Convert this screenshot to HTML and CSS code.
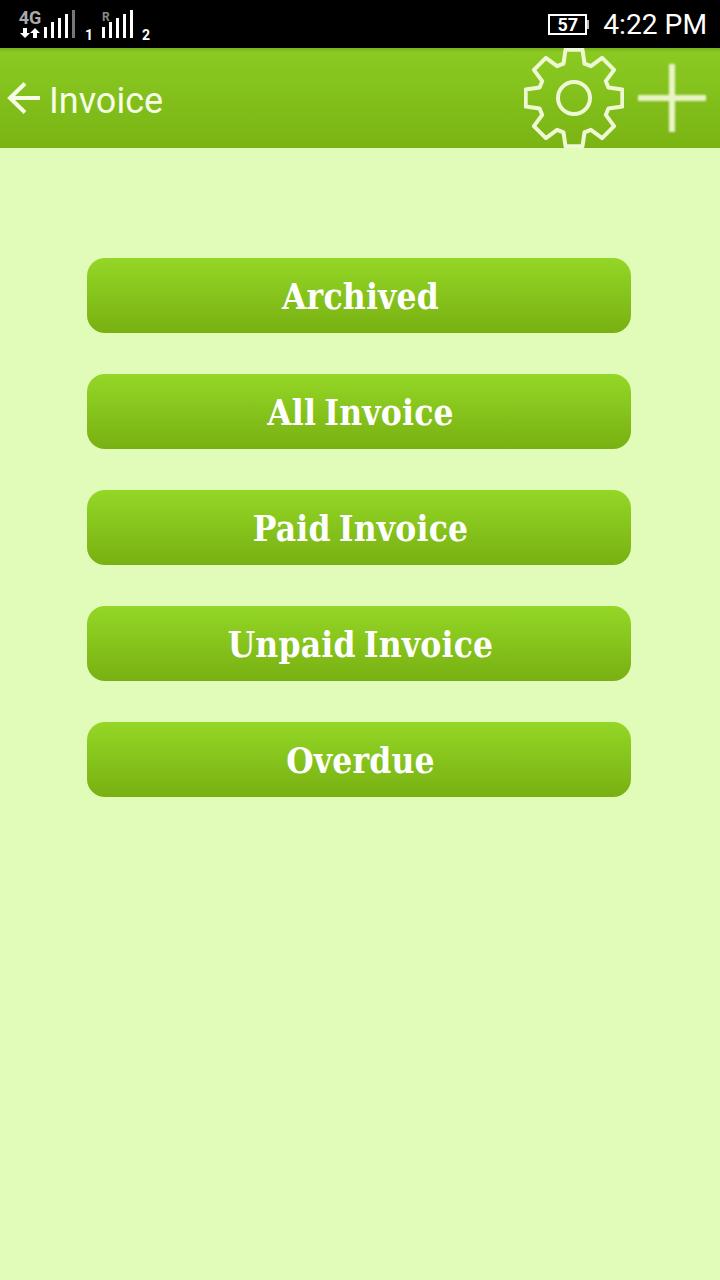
FILE: index.html
```html
<!DOCTYPE html>
<html lang="en">
<head>
    <meta charset="UTF-8">
    <meta name="viewport" content="width=device-width, initial-scale=1.0">
    <title>Invoice</title>
    <link rel="stylesheet" href="styles.css">
</head>
<body>
    <div class="status-bar">
        <div class="net">
            <span class="net-type">4G</span>
            <svg class="net-arrows" width="20" height="10" viewBox="0 0 20 10">
                <path d="M5 10L0 5h3V0h4v5h3zM15 0l5 5h-3v5h-4V5h-3z" fill="#fff"/>
            </svg>
        </div>
        <svg class="bars" width="31" height="28" viewBox="0 0 31 28">
            <path d="M0 17h3v11H0zM7 12h3v16H7zM14 8h3v20h-3zM21 4h3v24h-3z" fill="#fff"/>
            <path d="M28 0h3v28h-3z" fill="#777"/>
        </svg>
        <span class="sim sim-one">1</span>
        <div class="roaming">
            <span class="roaming-mark">R</span>
            <svg class="bars-second" width="31" height="28" viewBox="0 0 31 28">
                <path d="M0 17h3v11H0zM7 12h3v16H7zM14 8h3v20h-3zM21 4h3v24h-3zM28 0h3v28h-3z" fill="#fff"/>
            </svg>
        </div>
        <span class="sim sim-two">2</span>

        <div class="status-right">
            <div class="battery"><span>57</span></div>
            <span class="time">4:22 PM</span>
        </div>
    </div>

    <div class="app-bar">
        <svg class="back" width="34" height="34" viewBox="0 0 34 34">
            <path d="M33 17H3M18 2.5L3 17 18 31.5" fill="none" stroke="#f6fce6" stroke-width="4"/>
        </svg>
        <h1>Invoice</h1>
        <svg class="gear" width="100" height="100" viewBox="-50 -50 100 100">
            <path d="M-10.5 -34.4L-8.5 -48.3L8.5 -48.3L10.5 -34.4L16.9 -31.8L28.1 -40.1L40.1 -28.1L31.8 -16.9L34.4 -10.5L48.3 -8.5L48.3 8.5L34.4 10.5L31.8 16.9L40.1 28.1L28.1 40.1L16.9 31.8L10.5 34.4L8.5 48.3L-8.5 48.3L-10.5 34.4L-16.9 31.8L-28.1 40.1L-40.1 28.1L-31.8 16.9L-34.4 10.5L-48.3 8.5L-48.3 -8.5L-34.4 -10.5L-31.8 -16.9L-40.1 -28.1L-28.1 -40.1L-16.9 -31.8Z" fill="none" stroke="#eef8d2" stroke-width="4" stroke-linejoin="round"/>
            <circle r="16" fill="none" stroke="#eef8d2" stroke-width="4"/>
        </svg>
        <svg class="plus" width="68" height="68" viewBox="0 0 68 68">
            <path d="M34 0v68M0 34h68" fill="none" stroke="#e9f5c8" stroke-width="6"/>
        </svg>
    </div>

    <div class="menu">
        <button>Archived</button>
        <button>All Invoice</button>
        <button>Paid Invoice</button>
        <button>Unpaid Invoice</button>
        <button>Overdue</button>
    </div>
</body>
</html>
```

FILE: styles.css
```css
body {
    margin: 0;
    height: 1280px;
    overflow: hidden;
    font-family: Roboto, sans-serif;
    background-color: #e1fbb8;
}

.status-bar {
    display: flex;
    align-items: flex-start;
    height: 48px;
    background-color: #000;
    color: #fff;
}

.net {
    display: flex;
    flex-direction: column;
    align-items: center;
    width: 24px;
    margin: 9px 0 0 18px;
}

.net-type {
    font-size: 18px;
    font-weight: 700;
    line-height: 17px;
    color: #aaa;
}

.net-arrows {
    margin-top: 2px;
}

.bars {
    margin: 10px 0 0 2px;
}

.sim {
    font-size: 14px;
    font-weight: 700;
    line-height: 14px;
    margin-top: 28px;
}

.sim-one {
    width: 8px;
    margin-left: 10px;
}

.roaming {
    position: relative;
    margin: 10px 0 0 9px;
}

.roaming-mark {
    position: absolute;
    top: 2px;
    left: 0;
    font-size: 12px;
    font-weight: 700;
    line-height: 11px;
    color: #888;
}

.bars-second {
    display: block;
}

.sim-two {
    margin-left: 9px;
}

.status-right {
    display: flex;
    align-items: center;
    gap: 16px;
    height: 48px;
    margin-left: auto;
    padding-right: 13px;
}

.battery {
    position: relative;
    box-sizing: border-box;
    width: 39px;
    height: 21px;
    border: 2px solid #fff;
    font-size: 18px;
    font-weight: 700;
    line-height: 18px;
    text-align: center;
}

.battery::after {
    content: "";
    position: absolute;
    top: 4px;
    right: -4px;
    width: 2px;
    height: 9px;
    background-color: #bbb;
}

.time {
    font-size: 28.2px;
}

.app-bar {
    display: flex;
    align-items: center;
    height: 100px;
    overflow: hidden;
    background: linear-gradient(#78b01a 0, #8aca22 4px, #7ab414 100%);
    color: #f6fce6;
}

.back {
    margin-left: 7px;
}

h1 {
    margin: 5px 0 0 8px;
    font-size: 36px;
    font-weight: 400;
}

.gear {
    margin-left: auto;
    flex-shrink: 0;
    filter: blur(0.6px);
}

.plus {
    margin: 0 14px 0 14px;
    filter: blur(0.8px);
}

.menu {
    display: flex;
    flex-direction: column;
    gap: 41px;
    padding: 110px 89px 0 87px;
}

.menu button {
    height: 75px;
    padding: 2px 0 0 3px;
    border: none;
    border-radius: 18px;
    background: linear-gradient(#94d726, #78b012);
    color: #fff;
    font-family: "DejaVu Serif", serif;
    font-size: 35px;
    font-stretch: condensed;
    font-weight: 700;
    letter-spacing: 0.2px;
    word-spacing: -3px;
}
```
